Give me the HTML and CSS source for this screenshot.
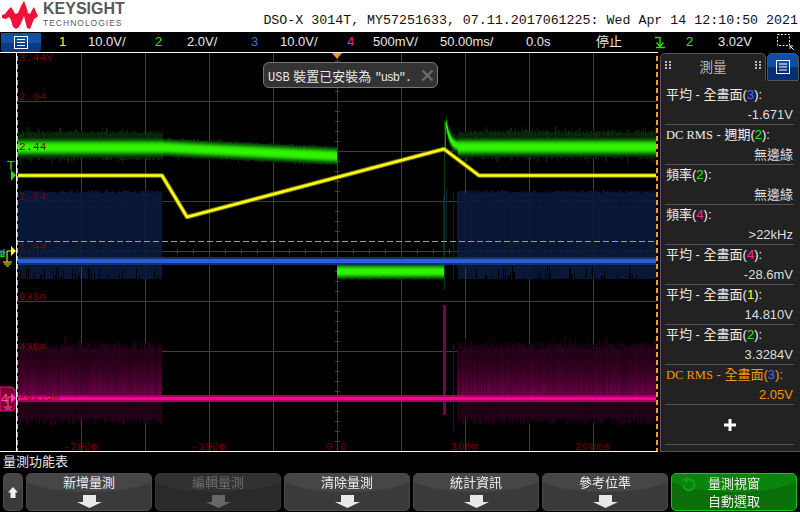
FILE: index.html
```html
<!DOCTYPE html>
<html lang="zh-Hant">
<head>
<meta charset="utf-8">
<title>DSO-X 3014T</title>
<link rel="stylesheet" href="styles.css">
</head>
<body>
<div class="screen">
  <header class="head">
    <div class="brand">
      <svg class="wave" width="38" height="31" viewBox="0 0 38 31"><path d="M1 15 L4 14 L7 10 L10 7 L12 10 L14 14 L17 13 L20 6 L23 1 L25 6 L27 13 L29 14 L31 10 L33 7 L35 12 L37 16 L35 18 L33 19 L31 24 L29 29 L26 28 L24 20 L23 16 L21 21 L18 27 L15 29 L12 27 L10 20 L8 17 L5 19 L1 18 Z" fill="#ec1238"/></svg>
      <div class="brand-text">
        <div class="brand-name">KEYSIGHT</div>
        <div class="brand-sub">TECHNOLOGIES</div>
      </div>
    </div>
    <div class="title">DSO-X 3014T, MY57251633, 07.11.2017061225: Wed Apr 14 12:10:50 2021</div>
  </header>

  <nav class="bar">
    <div class="menu-btn">
      <svg width="14" height="13" viewBox="0 0 14 13"><rect x=".5" y=".5" width="13" height="12" fill="none" stroke="#fff"/><path d="M3 3.5H11M3 6.5H11M3 9.5H11" stroke="#fff"/></svg>
    </div>
    <span class="c1">1</span><span>10.0V/</span>
    <span class="c2">2</span><span>2.0V/</span>
    <span class="c3">3</span><span>10.0V/</span>
    <span class="c4">4</span><span>500mV/</span>
    <span>50.00ms/</span><span>0.0s</span>
    <span class="stop">停止</span>
    <svg class="trig" width="10" height="13" viewBox="0 0 10 13"><path d="M0 1.500H5V11M1.500 6.500L5 10.500L8.500 6.500M1 11.500H10" fill="none" stroke="#22e000" stroke-width="1.400"/></svg>
    <span class="c2">2</span><span>3.02V</span>
    <svg class="zoombox" width="17" height="17" viewBox="0 0 17 17"><rect x=".5" y=".5" width="12" height="11" fill="none" stroke="#eee" stroke-dasharray="2 1.500"/><path d="M13 12L17 16M13 12V15M13 12H16" stroke="#eee" fill="none"/></svg>
  </nav>

  <main class="middle">
    <section class="scope">
      <svg class="gutter" width="16" height="398" viewBox="0 0 16 398">
        <text x="11" y="117" class="t-mark">T</text>
        <path d="M11 117L16 122L11 128Z" fill="#22e000"/>
        <text x="0" y="204" class="g-num">2</text>
        <path d="M1 197V203M4 196V203" stroke="#35c8d8" stroke-width="1"/>
        <path d="M11 193L16 198L11 203Z" fill="#ffff20"/>
        <path d="M7 209V198H11M3 209H12M4 211H11M6 213H9" fill="none" stroke="#ffff20"/>
        <path d="M0 334H12L15 337V355L12 358H0Z" fill="#7a0030" stroke="#ff0090"/>
        <text x="1" y="350" class="g-four">4</text>
        <path d="M11 340L16 345L11 350Z" fill="#ff3fb0"/>
        <path d="M8 354V344H11M4 354H12M5 356H11" fill="none" stroke="#ff4fb0"/>
      </svg>
      <div class="plot">
        <canvas id="wave" width="642" height="398"></canvas>
        <div class="yscale">
          <span>3.44V</span><span>2.94</span><span>2.44</span><span>1.94</span><span>1.44</span><span>938m</span><span>438m</span><span>-62.5m</span>
        </div>
        <div class="xscale">
          <span>-200m</span><span>-100m</span><span>0.0</span><span>100m</span><span>200ms</span>
        </div>
        <div class="caret"></div>
        <div class="toast">
          <span class="toast-text"><span class="mono">USB</span> 裝置已安裝為 <span class="mono mono-tight">"usb".</span></span>
          <svg width="13" height="13" viewBox="0 0 13 13"><path d="M1.500 1.500L11.500 11.500M11.500 1.500L1.500 11.500" stroke="#6c6c6c" stroke-width="2.400"/></svg>
        </div>
      </div>
    </section>

    <aside class="panel">
      <div class="tabs">
        <div class="tab">
          <i class="grip"></i><span>測量</span><i class="grip"></i>
        </div>
        <div class="tab-blue">
          <svg width="14" height="14" viewBox="0 0 14 14"><rect x=".5" y=".5" width="13" height="13" fill="none" stroke="#fff"/><path d="M3 4H11M3 7H11M3 10H11" stroke="#fff"/></svg>
        </div>
      </div>
      <div class="rows">
        <div class="row"><div>平均 - 全畫面(<span class="c3">3</span>):</div><div class="val">-1.671V</div></div>
        <div class="row"><div><span class="rms">DC RMS</span> - 週期(<span class="c2">2</span>):</div><div class="val">無邊緣</div></div>
        <div class="row"><div>頻率(<span class="c2">2</span>):</div><div class="val">無邊緣</div></div>
        <div class="row"><div>頻率(<span class="c4">4</span>):</div><div class="val">&gt;22kHz</div></div>
        <div class="row"><div>平均 - 全畫面(<span class="c4">4</span>):</div><div class="val">-28.6mV</div></div>
        <div class="row"><div>平均 - 全畫面(<span class="c1">1</span>):</div><div class="val">14.810V</div></div>
        <div class="row"><div>平均 - 全畫面(<span class="c2">2</span>):</div><div class="val">3.3284V</div></div>
        <div class="row row-active"><div><span class="rms">DC RMS</span> - 全畫面(<span class="c3">3</span>):</div><div class="val">2.05V</div></div>
        <div class="row row-add"><svg width="12" height="12" viewBox="0 0 12 12"><path d="M4.500 0H7.500V4.500H12V7.500H7.500V12H4.500V7.500H0V4.500H4.500Z" fill="#fff"/></svg></div>
      </div>
    </aside>
  </main>

  <footer class="foot">
    <div class="foot-title">量測功能表</div>
    <div class="softkeys">
      <button class="key key-up"><svg width="10" height="11" viewBox="0 0 10 11"><path d="M5 0L10 5.500H7.500V11H2.500V5.500H0Z" fill="#eee"/></svg></button>
      <button class="key"><span>新增量測</span><svg class="down" width="25" height="13" viewBox="0 0 25 13"><path d="M6 0H19V7H25L12.500 13L0 7H6Z"/></svg></button>
      <button class="key key-dim"><span>編輯量測</span><svg class="down" width="25" height="13" viewBox="0 0 25 13"><path d="M6 0H19V7H25L12.500 13L0 7H6Z"/></svg></button>
      <button class="key"><span>清除量測</span><svg class="down" width="25" height="13" viewBox="0 0 25 13"><path d="M6 0H19V7H25L12.500 13L0 7H6Z"/></svg></button>
      <button class="key"><span>統計資訊</span><svg class="down" width="25" height="13" viewBox="0 0 25 13"><path d="M6 0H19V7H25L12.500 13L0 7H6Z"/></svg></button>
      <button class="key"><span>參考位準</span><svg class="down" width="25" height="13" viewBox="0 0 25 13"><path d="M6 0H19V7H25L12.500 13L0 7H6Z"/></svg></button>
      <button class="key key-green">
        <svg class="cycle" width="16" height="15" viewBox="0 0 16 15"><path d="M6 2.500A5.500 5.500 0 1 1 2.500 8" fill="none" stroke="#0fa018" stroke-width="2.400"/><path d="M0 3L7 0V6Z" fill="#0fa018"/></svg>
        <span>量測視窗</span><span>自動選取</span>
      </button>
    </div>
  </footer>
</div>
<script src="script.js"></script>
</body>
</html>
```
FILE: styles.css
```css
* { box-sizing: border-box; }
html, body { margin: 0; padding: 0; background: #000; }
body { width: 800px; height: 512px; overflow: hidden; font-family: "Liberation Sans", "Noto Sans CJK TC", sans-serif; font-size: 13px; color: #eee; }
.screen { display: flex; flex-direction: column; width: 800px; height: 512px; }

.head { height: 32px; background: #fff; display: flex; justify-content: space-between; align-items: flex-start; }
.brand { display: flex; padding-left: 1px; gap: 4px; }
.wave { display: block; }
.brand-name { font-size: 16px; font-weight: 700; line-height: 16px; margin-top: 1px; color: #58595b; }
.brand-sub { font-size: 8.500px; line-height: 9px; color: #58595b; letter-spacing: 1px; margin-top: 2px; }
.title { font-family: "Liberation Mono", monospace; font-size: 13.300px; line-height: 15px; color: #111; margin: 13px 2px 0 0; white-space: pre; }

.bar { height: 20px; padding-left: 1px; display: grid; grid-template-columns: 58px 29px 67px 32px 64px 29px 67px 26px 67px 86px 70px 59px 31px 32px 59px 1fr; align-items: center; line-height: 20px; color: #e8e8e8; white-space: nowrap; }
.menu-btn { width: 40px; height: 19px; display: flex; align-items: center; justify-content: center; background: linear-gradient(#14509f 0 50%, #0b3b80 50%); border-radius: 0 0 3px 3px; }
.stop { font-size: 13px; }
.c1 { color: #ffff30; }
.c2 { color: #2ee81e; }
.c3 { color: #3f6cf0; }
.c4 { color: #ff1f9f; }
.trig, .zoombox { display: block; }

.middle { display: flex; height: 400px; }
.scope { width: 658px; height: 400px; display: flex; border-top: 1px solid #fff; border-bottom: 1px solid #fff; }
.gutter { display: block; flex: none; }
.t-mark { font: 13px "Liberation Sans", sans-serif; fill: #22e000; text-anchor: middle; }
.g-num { font: 700 9px "Liberation Sans", sans-serif; fill: #22e000; }
.g-four { font: 13px "Liberation Sans", sans-serif; fill: #ff4fb0; }
.plot { position: relative; width: 642px; height: 398px; }
canvas { display: block; }

.yscale { position: absolute; left: 3px; top: -1px; display: flex; flex-direction: column; font: 11px/12px "Liberation Mono", monospace; letter-spacing: .35px; color: #7a0000; }
.yscale span { height: 50px; }
.yscale span:first-child { height: 39px; }
.xscale { position: absolute; left: 1px; bottom: -2px; width: 640px; display: grid; grid-template-columns: repeat(5, 128px); text-align: center; font: 11px/12px "Liberation Mono", monospace; letter-spacing: .35px; color: #7a0000; }

.caret { position: absolute; left: 316px; top: 0; width: 0; height: 0; border: 5.500px solid transparent; border-top: 6px solid #f5980f; border-bottom: 0; }
.toast { position: absolute; left: 247px; top: 9px; width: 175px; height: 26px; display: flex; align-items: center; justify-content: space-between; padding: 0 3px 0 4px; background: #333; border: 1px solid #777; border-radius: 6px; font-size: 13px; color: #e8e8e8; white-space: pre; }
.mono { font: 12px "Liberation Mono", monospace; }
.mono-tight { letter-spacing: -1.200px; }

.panel { flex: 1; padding-left: 2px; display: flex; flex-direction: column; }
.tabs { height: 28px; display: flex; margin-top: 1px; }
.tab { width: 106px; background: #222; border: 1px solid #555; border-bottom: 0; border-radius: 5px 5px 0 0; display: flex; justify-content: space-between; align-items: center; padding: 0 4px 4px 4px; color: #bbb; font-size: 13.500px; }
.grip { width: 6px; height: 9px; background: radial-gradient(circle at 1px 1px, #bbb 1.100px, transparent 1.200px) 0 0 / 4px 3px; }
.tab-blue { margin-left: 1px; width: 32px; display: flex; align-items: center; justify-content: center; background: linear-gradient(#0d4fa8 0 50%, #062f73 50%); border: 1px solid #555; border-radius: 5px 5px 0 0; }
.rows { flex: 1; background: #222; border: 1px solid #555; border-top: 0; border-right: 0; padding: 4px 6px 0 4px; display: flex; flex-direction: column; }
.row { height: 40px; border-bottom: 1px solid #555; line-height: 20px; padding-left: 1px; color: #eee; white-space: nowrap; }
.val { text-align: right; padding-right: 1px; color: #ddd; }
.rms { font-family: "Liberation Serif", serif; font-size: 12.500px; }
.row-active { color: #f5980f; }
.row-active .val { color: #f5980f; }
.row-add { display: flex; align-items: center; justify-content: center; }

.foot { flex: 1; display: flex; flex-direction: column; }
.foot-title { height: 21px; line-height: 19px; padding-left: 3px; color: #e8e8e8; }
.softkeys { display: flex; gap: 3px; padding-left: 3px; }
.key { position: relative; width: 126px; height: 38px; padding: 1px 0 0; border: 1px solid #4a4a4a; border-radius: 5px; font: inherit; color: #eee; display: flex; flex-direction: column; align-items: center; justify-content: space-between; overflow: hidden; background: #3a3a3a; }
.key::before { content: ""; position: absolute; left: -10px; right: -10px; top: -22px; height: 40px; border-radius: 50%; background: #4a4a4a; opacity: .8; }
.key > * { position: relative; }
.key span { line-height: 15px; }
.key-up { width: 20px; justify-content: center; }
.down { fill: #e8e8e8; display: block; margin-bottom: 2px; }
.key-dim { background: #2a2a2a; border-color: #333; color: #6c6c6c; }
.key-dim::before { background: #333; }
.key-dim .down { fill: #666; }
.key-green { background: #0a6e0a; border-color: #1bc41b; justify-content: center; color: #f0f0f0; }
.key-green::before { background: #0b8a0b; }
.key-green span { line-height: 18px; }
.key > .cycle { position: absolute; left: 9px; top: 3px; }
```
FILE: script.js
```js
(function () {
  var ctx = document.getElementById('wave').getContext('2d');
  var OX = 16, OY = 53;
  var seed = 12345;
  function rnd() {
    seed = (seed * 1664525 + 1013904223) >>> 0;
    return seed / 4294967296;
  }
  function rect(x, y, w, h, c) {
    ctx.fillStyle = c;
    ctx.fillRect(x - OX, y - OY, w, h);
  }
  function lerp(a, b, t) { return a + (b - a) * t; }

  // graticule
  var x, y;
  var grid = '#3e3e3e';
  [81, 145, 209, 273, 337, 401, 465, 529, 593].forEach(function (v) { rect(v, 53, 1, 398, grid); });
  [101, 151, 201, 251, 301, 351, 401].forEach(function (v) { rect(17, v, 640, 1, grid); });
  for (y = 61; y < 451; y += 10) rect(335, y, 5, 1, grid);
  for (x = 33; x < 657; x += 16) rect(x, 249, 1, 5, grid);

  // green persistence band: per-pixel falloff around the trace, noisy skirt outside
  function green(x0, x1, yFn, up, dn, sigma, spike) {
    for (var px = x0; px < x1; px++) {
      var c = yFn(px);
      var top = Math.round(c - up * (0.8 + rnd() * 0.2) - (rnd() < 0.15 ? rnd() * spike : 0));
      var bot = Math.round(c + dn * (0.8 + rnd() * 0.2) + (rnd() < 0.15 ? rnd() * spike : 0));
      var shade = 30 + rnd() * 18;
      for (var py = top; py < bot; py++) {
        var d = Math.abs(py + 0.5 - c);
        var i = Math.exp(-Math.pow(d / sigma, 3));
        if (i < 0.1) {
          rect(px, py, 1, 1, 'rgb(8,' + Math.round(shade) + ',8)');
        } else {
          rect(px, py, 1, 1, 'rgb(' + Math.round(44 * i * i + 6) + ',' + Math.round(34 + 210 * i) + ',' + Math.round(8 * (1 - i)) + ')');
        }
      }
    }
  }
  function flat(v) { return function () { return v; }; }

  // blue noise field
  function blueField(x0, x1) {
    for (var px = x0; px < x1; px++) {
      var top = Math.round(193 - rnd() * 3);
      var bot = Math.round(279 - (rnd() < 0.22 ? rnd() * 14 : 0));
      rect(px, top, 1, bot - top, 'rgba(10,' + Math.round(23 + rnd() * 4) + ',' + Math.round(56 + rnd() * 6) + ',.9)');
    }
  }
  // pink noise field
  function pinkField(x0, x1) {
    for (var px = x0; px < x1; px++) {
      var top = Math.round(342 + rnd() * 7 - (rnd() < 0.2 ? rnd() * 8 : 0));
      var bot = Math.round(417 + rnd() * 8);
      var k = 0.85 + rnd() * 0.3;
      for (var py = top; py < bot; py += 2) {
        var t = py < 398 ? (py - 342) / 56 : 0;
        var r = Math.round(lerp(36, 125, t * t) * k);
        var b = Math.round(lerp(22, 82, t * t) * k);
        ctx.fillStyle = 'rgba(' + r + ',0,' + b + ',.93)';
        ctx.fillRect(px - OX, py - OY, 1, 2);
      }
    }
  }

  blueField(18, 162);
  blueField(457, 657);
  rect(443, 196, 1, 60, '#0d2450');
  rect(446, 190, 1, 50, '#0d2450');
  rect(453, 192, 1, 88, '#0c1e44');

  pinkField(18, 162);
  pinkField(457, 657);
  rect(443, 305, 3, 110, '#7a0048');
  rect(453, 345, 1, 85, '#4a0030');

  // green channel
  green(18, 163, flat(147.5), 17, 13, 7, 5);
  green(163, 337, function (p) { return lerp(147.5, 156, (p - 163) / 174); }, 10, 10, 6.5, 2);
  green(337, 444, flat(271.5), 8, 9, 6, 1);
  rect(444, 120, 1, 170, '#0e3c0e');
  rect(445, 122, 1, 26, '#188a10');
  green(446, 458, function (p) { return 147 - 22 * Math.exp(-(p - 446) / 4); }, 11, 10, 5, 1);
  green(458, 657, flat(147), 17, 12, 7, 5);

  // orange reference line
  for (x = 18; x < 657; x += 9) rect(x, 241, 6, 1, '#e8901a');

  // yellow channel
  var pts = [[18, 175.5], [162, 175.5], [187, 217], [444, 149], [479, 175.5], [657, 175.5]];
  function poly(width, color) {
    ctx.beginPath();
    pts.forEach(function (p, n) {
      var X = p[0] - OX, Y = p[1] - OY;
      if (n) ctx.lineTo(X, Y); else ctx.moveTo(X, Y);
    });
    ctx.lineWidth = width;
    ctx.lineJoin = 'round';
    ctx.strokeStyle = color;
    ctx.stroke();
  }
  poly(4.5, '#7a7a10');
  poly(2.5, '#ffff10');

  // blue channel line
  rect(17, 257, 640, 8, '#17306c');
  rect(17, 259, 640, 4, '#2a5ce0');

  // pink channel line
  rect(17, 395, 640, 7, '#a8005e');
  rect(17, 397, 640, 3, '#ff0096');

  // frame edges
  for (y = 53; y < 451; y++) {
    rect(16, y, 1, 1, '#fff');
    rect(17, y, 1, 1, y % 8 < 5 ? '#f5a020' : '#000');
    rect(656, y, 2, 1, y % 8 < 5 ? '#f5a020' : '#000');
  }
})();
```
